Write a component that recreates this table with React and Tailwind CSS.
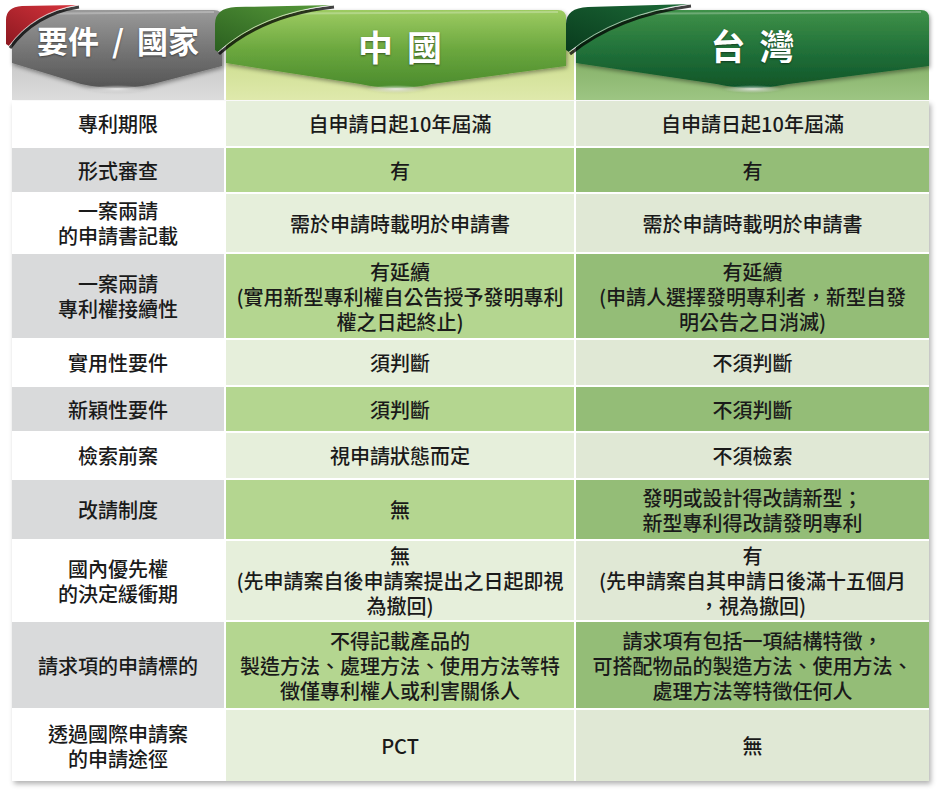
import React from "react";

const rows = [
  { h: "h-[45px]", g: false, a: ["專利期限"], b: ["自申請日起10年屆滿"], c: ["自申請日起10年屆滿"] },
  { h: "h-[44px]", g: true, a: ["形式審查"], b: ["有"], c: ["有"] },
  { h: "h-[58px]", g: false, a: ["一案兩請", "的申請書記載"], b: ["需於申請時載明於申請書"], c: ["需於申請時載明於申請書"] },
  {
    h: "h-[84px]",
    g: true,
    a: ["一案兩請", "專利權接續性"],
    b: ["有延續", "(實用新型專利權自公告授予發明專利", "權之日起終止)"],
    c: ["有延續", "(申請人選擇發明專利者，新型自發", "明公告之日消滅)"],
  },
  { h: "h-[45px]", g: false, a: ["實用性要件"], b: ["須判斷"], c: ["不須判斷"] },
  { h: "h-[44px]", g: true, a: ["新穎性要件"], b: ["須判斷"], c: ["不須判斷"] },
  { h: "h-[45px]", g: false, a: ["檢索前案"], b: ["視申請狀態而定"], c: ["不須檢索"] },
  { h: "h-[59px]", g: true, a: ["改請制度"], b: ["無"], c: ["發明或設計得改請新型；", "新型專利得改請發明專利"] },
  {
    h: "h-[79px]",
    g: false,
    a: ["國內優先權", "的決定緩衝期"],
    b: ["無", "(先申請案自後申請案提出之日起即視", "為撤回)"],
    c: ["有", "(先申請案自其申請日後滿十五個月", "，視為撤回)"],
  },
  {
    h: "h-[86px]",
    g: true,
    a: ["請求項的申請標的"],
    b: ["不得記載產品的", "製造方法、處理方法、使用方法等特", "徵僅專利權人或利害關係人"],
    c: ["請求項有包括一項結構特徵，", "可搭配物品的製造方法、使用方法、", "處理方法等特徵任何人"],
  },
  { h: "h-[71px]", g: false, a: ["透過國際申請案", "的申請途徑"], b: ["PCT"], c: ["無"] },
];

function Lines({ lines }) {
  return (
    <div className="text-center">
      {lines.map((l, i) => (
        <div key={i} className="whitespace-nowrap">
          {l}
        </div>
      ))}
    </div>
  );
}

function Tab({ id, w, bodyW, body, band, fold, foldPath, innerPath, children }) {
  const cx = bodyW / 2;
  const bodyPath = `M0,36 Q0,10 26,10 L${bodyW - 8},10 Q${bodyW},10 ${bodyW},18 L${bodyW},66 L${cx + 36},84 Q${cx},92 ${cx - 36},84 L0,63 Z`;
  return (
    <div className="relative h-[100px]">
      <svg
        className="absolute left-[-12px] top-0 overflow-visible"
        width={w + 12}
        height={100}
        viewBox={`-12 0 ${w + 12} 100`}
      >
        <defs>
          <linearGradient id={`${id}-body`} x1="0" y1="0" x2="0" y2="1">
            <stop offset="0" stopColor={body[0]} />
            <stop offset="0.5" stopColor={body[1]} />
            <stop offset="1" stopColor={body[2]} />
          </linearGradient>
          <linearGradient id={`${id}-band`} x1="0" y1="0" x2="0" y2="1">
            <stop offset="0" stopColor={band[0]} />
            <stop offset="1" stopColor={band[1]} />
          </linearGradient>
          <linearGradient id={`${id}-fold`} x1="1" y1="0" x2="0" y2="1">
            <stop offset="0" stopColor={fold[0]} />
            <stop offset="1" stopColor={fold[1]} />
          </linearGradient>
          <radialGradient id={`${id}-glow`} cx="0.5" cy="0.5" r="0.5">
            <stop offset="0" stopColor="#ffffff" stopOpacity="0.75" />
            <stop offset="1" stopColor="#ffffff" stopOpacity="0" />
          </radialGradient>
          <filter id={`${id}-sh`} x="-10%" y="-10%" width="120%" height="130%">
            <feDropShadow dx="1" dy="2" stdDeviation="2" floodColor="#000" floodOpacity="0.4" />
          </filter>
        </defs>
        <rect x="0" y="50" width={w} height="50" fill={`url(#${id}-band)`} />
        <path d={bodyPath} fill={`url(#${id}-body)`} filter={`url(#${id}-sh)`} />
        <path d={`M4,14 L${bodyW - 8},12`} stroke="#ffffff" strokeOpacity="0.25" strokeWidth="2" fill="none" />
        <ellipse cx={cx} cy={89} rx={30} ry={4} fill={`url(#${id}-glow)`} />
        <path d={innerPath} stroke="#000" strokeOpacity="0.75" strokeWidth="3" fill="none" transform="translate(1,2)" />
        <path d={foldPath} fill={`url(#${id}-fold)`} />
        <path d={innerPath} stroke="#ffffff" strokeOpacity="0.55" strokeWidth="1" fill="none" />
      </svg>
      {children}
    </div>
  );
}

export default function App() {
  return (
    <div
      lang="zh-Hant-TW"
      className="w-[940px] h-[796px] bg-white pl-[12px] font-['Noto_Sans_CJK_TC','Noto_Sans',sans-serif] text-[#1a1a1a]"
    >
      <div className="grid grid-cols-[212px_348px_353px] gap-x-[2px]">
        <Tab
          id="t1"
          w={212}
          bodyW={210}
          body={["#9a9a9a", "#767676", "#555555"]}
          band={["#c4c4c4", "#dcdcdc"]}
          fold={["#d8343d", "#8c1820"]}
          foldPath="M-6,44 L-6,20 Q-6,7 10,6 L66,5 Q22,12 -3,46 Z"
          innerPath="M66,5 Q22,12 -3,46"
        >
          <div className="relative flex justify-center pt-[20px] text-[31px] leading-[40px] font-bold text-white [word-spacing:6px] [text-shadow:0_1px_2px_rgba(0,0,0,0.45)]">
            要件 / 國家
          </div>
        </Tab>
        <Tab
          id="t2"
          w={348}
          bodyW={340}
          body={["#9dcb62", "#6ca83f", "#4a8b2c"]}
          band={["#cadc8b", "#dfe9ac"]}
          fold={["#579a3a", "#2a5f1f"]}
          foldPath="M-11,50 L-11,24 Q-11,8 10,7 L107,5 Q35,13 -8,52 Z"
          innerPath="M107,5 Q35,13 -8,52"
        >
          <div className="relative flex justify-center pt-[26px] text-[35px] leading-[40px] font-bold text-white [word-spacing:6px] [text-shadow:0_1px_2px_rgba(0,0,0,0.45)]">
            中 國
          </div>
        </Tab>
        <Tab
          id="t3"
          w={353}
          bodyW={353}
          body={["#3f9148", "#22723a", "#105528"]}
          band={["#80ad62", "#9dc583"]}
          fold={["#1c6a37", "#093b1d"]}
          foldPath="M-10,50 L-10,24 Q-10,8 12,7 L114,4 Q40,14 -7,52 Z"
          innerPath="M114,4 Q40,14 -7,52"
        >
          <div className="relative flex justify-center pt-[25px] text-[35px] leading-[40px] font-bold text-white [word-spacing:6px] [text-shadow:0_1px_2px_rgba(0,0,0,0.45)]">
            台 灣
          </div>
        </Tab>
      </div>
      <div className="mt-[1px] w-[917px] grid grid-cols-[212px_348px_353px] gap-[2px] bg-white shadow-[2px_3px_5px_rgba(0,0,0,0.3)] text-[20px] leading-[25px] font-medium">
        {rows.map((r, i) => (
          <React.Fragment key={i}>
            <div className={`${r.h} flex items-center justify-center ${r.g ? "bg-[#d9dadb]" : "bg-white"}`}>
              <Lines lines={r.a} />
            </div>
            <div className={`${r.h} flex items-center justify-center ${r.g ? "bg-[#b4d690]" : "bg-[#e6efdb]"}`}>
              <Lines lines={r.b} />
            </div>
            <div className={`${r.h} flex items-center justify-center ${r.g ? "bg-[#94bd77]" : "bg-[#e0e8d5]"}`}>
              <Lines lines={r.c} />
            </div>
          </React.Fragment>
        ))}
      </div>
    </div>
  );
}
